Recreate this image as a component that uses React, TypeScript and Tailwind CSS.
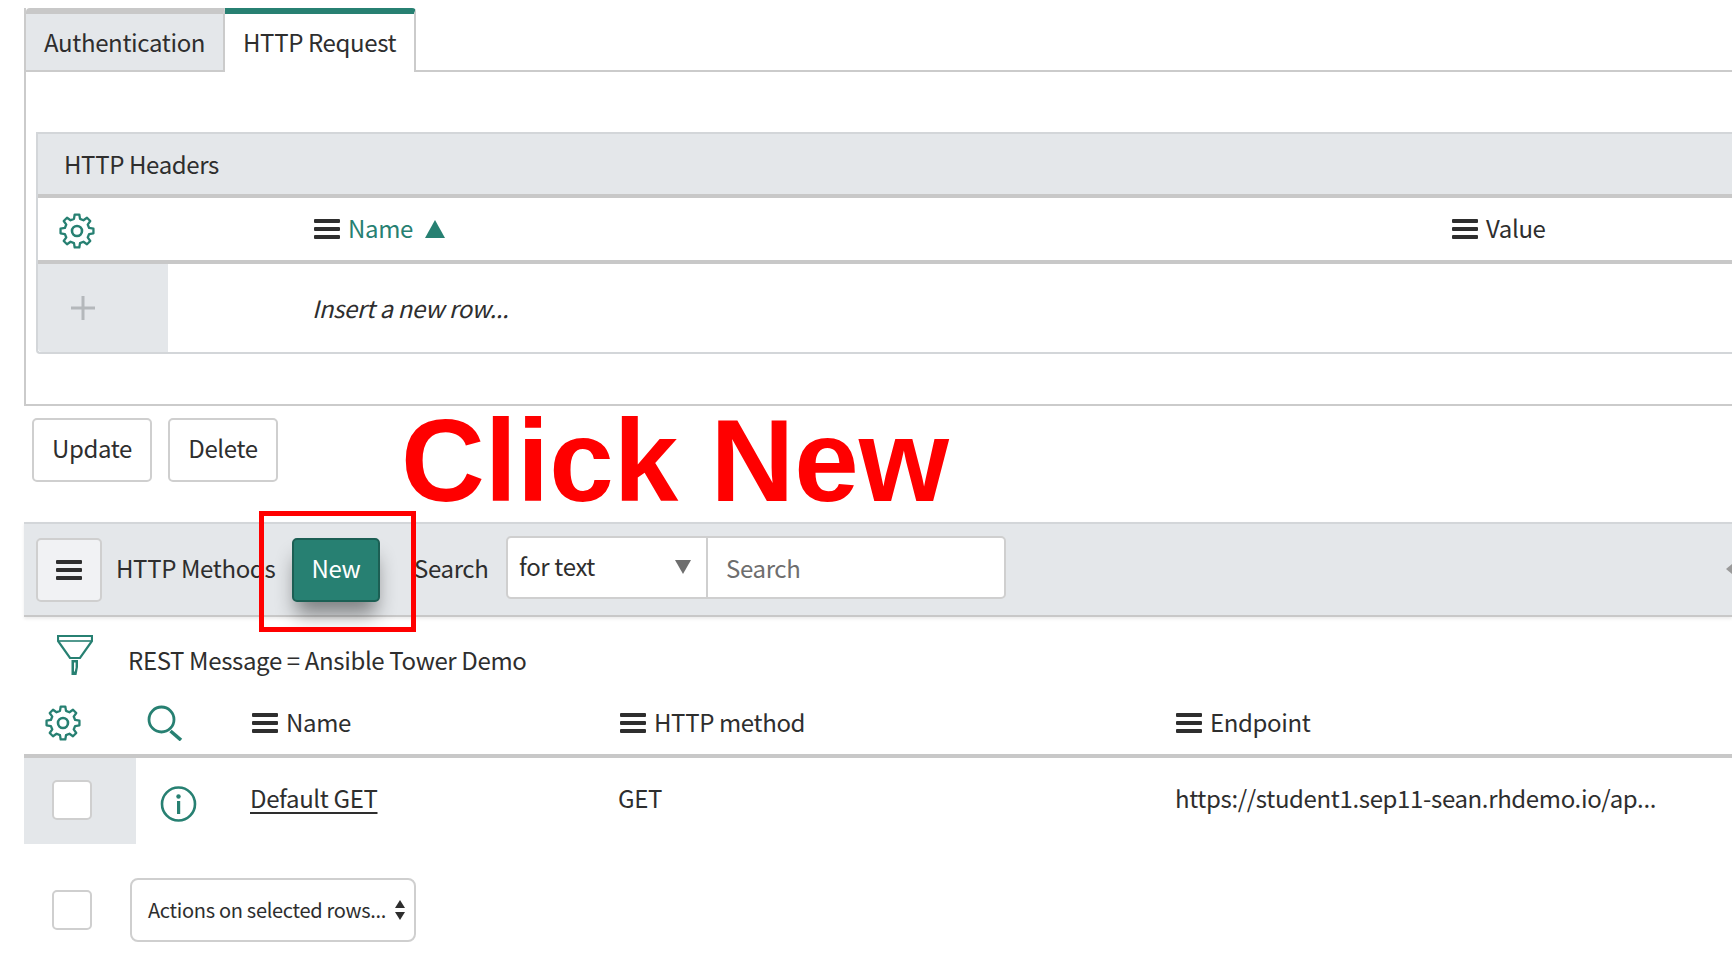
const FONT = "font-['Noto_Sans_CJK_SC','Noto_Sans',sans-serif]";

function Bars({ className = 'text-[#2e2e2e]' }: { className?: string }) {
  return (
    <svg width="26" height="20" viewBox="0 0 26 20" className={`shrink-0 ${className}`} fill="currentColor">
      <rect x="0" y="0" width="26" height="4" rx="1" />
      <rect x="0" y="8" width="26" height="4" rx="1" />
      <rect x="0" y="16" width="26" height="4" rx="1" />
    </svg>
  );
}

// eight toothed outline, same shape the service portal uses
const gearPath = () => {
  const pts: string[] = [];
  const at = (deg: number, r: number) => {
    const a = (deg * Math.PI) / 180;
    return `${(18 + r * Math.cos(a)).toFixed(2)} ${(18 + r * Math.sin(a)).toFixed(2)}`;
  };
  for (let i = 0; i < 8; i++) {
    const c = i * 45 - 90;
    pts.push(at(c - 14, 12.5), at(c - 8, 16.6), at(c + 8, 16.6), at(c + 14, 12.5));
  }
  return `M${pts.join('L')}Z`;
};

function Gear() {
  return (
    <svg width="36" height="36" viewBox="0 0 36 36" fill="none" stroke="#278072" strokeWidth="2.3" strokeLinejoin="round">
      <path d={gearPath()} />
      <circle cx="18" cy="18" r="5" strokeWidth="2.6" />
    </svg>
  );
}

function Funnel() {
  return (
    <svg width="36" height="40" viewBox="0 0 36 40" fill="none" stroke="#278072">
      <path d="M1 1h34v5L23 23H13L1 6z" strokeWidth="2.2" />
      <path d="M2 6h32" strokeWidth="1.6" />
      <path d="M14.5 25h6.5v7l-1.5 8h-5z" fill="#278072" stroke="none" />
      <path d="M17 27.5h1.6v5l-.8 4h-.8z" fill="#ffffff" stroke="none" />
    </svg>
  );
}

function Lens() {
  return (
    <svg width="36" height="36" viewBox="0 0 36 36" fill="none" stroke="#278072">
      <circle cx="14.5" cy="14.5" r="12.5" strokeWidth="2.8" />
      <path d="M23.5 26l10.5 9" strokeWidth="3.6" />
    </svg>
  );
}

function Info() {
  return (
    <svg width="37" height="36" viewBox="0 0 37 36" fill="none" stroke="#278072">
      <circle cx="18.5" cy="18" r="16.5" strokeWidth="2.6" />
      <circle cx="18.5" cy="10.5" r="2.2" fill="#278072" stroke="none" />
      <rect x="17" y="15" width="3.2" height="13" fill="#278072" stroke="none" />
    </svg>
  );
}

function Checkbox() {
  return <div className="w-[40px] h-[40px] bg-white border-2 border-[#cfcfcf] rounded-[5px]" />;
}

function Btn({ label, w }: { label: string; w: string }) {
  return (
    <button className={`${w} h-[64px] pb-[4px] bg-white border-2 border-[#cfcfcf] rounded-[5px] text-[24px] tracking-[-0.36px] text-[#2e2e2e]`}>
      {label}
    </button>
  );
}

export default function App() {
  return (
    <div className={`relative w-[1732px] h-[960px] overflow-hidden bg-white text-[#2e2e2e] text-[24px] tracking-[-0.36px] leading-none pt-[8px] pl-[24px] ${FONT}`}>
      {/* form section with tabs */}
      <div className="h-[398px] border-l-2 border-b-2 border-[#cbcbcb]">
        <div className="flex h-[64px] border-b-2 border-[#cbcbcb]">
          <div className="w-[199px] h-[64px] bg-[#e4e7ea] border-t-[6px] border-r-2 border-b-2 border-t-[#c8c8c8] border-r-[#cbcbcb] border-b-[#cbcbcb] rounded-tl-[4px] flex items-center pl-[18px]">
            Authentication
          </div>
          <div className="w-[191px] h-[64px] bg-white border-t-[6px] border-r-2 border-t-[#278072] border-r-[#cbcbcb] rounded-tr-[4px] flex items-center pl-[18px] pb-[3px]">
            HTTP Request
          </div>
        </div>
        <div className="ml-[10px] mt-[60px] border-l-2 border-b-2 border-[#d3d6d9] rounded-bl-[4px]">
          <div className="h-[66px] bg-[#e4e7ea] border-t-2 border-t-[#d3d6d9] border-b-4 border-b-[#c8c8c8] flex items-center pl-[26px]">
            HTTP Headers
          </div>
          <div className="h-[66px] border-b-4 border-[#c8c8c8] flex items-center">
            <div className="w-[276px] pl-[21px] pt-[3px] flex items-center"><Gear /></div>
            <div className="flex items-center gap-[8px] text-[#278072]">
              <Bars />
              <span className="pb-[2px]">Name</span>
              <svg width="20" height="18" viewBox="0 0 20 18" className="ml-[4px]" fill="#278072"><path d="M10 0l10 18H0z" /></svg>
            </div>
            <div className="flex items-center gap-[8px] ml-[1007px]">
              <Bars />
              <span className="pb-[2px]">Value</span>
            </div>
          </div>
          <div className="h-[88px] flex">
            <div className="w-[130px] bg-[#e4e7ea] flex items-center pl-[33px] rounded-bl-[4px]">
              <svg width="24" height="24" viewBox="0 0 24 24" stroke="#b4b8bb" strokeWidth="3"><path d="M12 0v24M0 12h24" /></svg>
            </div>
            <div className="flex items-center pl-[144px] italic">Insert a new row...</div>
          </div>
        </div>
      </div>

      <div className="flex gap-[16px] ml-[8px] mt-[12px]">
        <Btn label="Update" w="w-[120px]" />
        <Btn label="Delete" w="w-[110px]" />
      </div>

      {/* related list toolbar */}
      <div className="mt-[40px] h-[95px] bg-[#e4e7ea] border-t-2 border-t-[#d3d6d9] border-b-2 border-b-[#c8c8c8] shadow-[0_2px_3px_rgba(0,0,0,0.08)] flex items-center relative">
        <div className="ml-[12px] w-[66px] h-[64px] bg-[#f1f2f4] border-2 border-[#cfcfcf] rounded-[5px] flex items-center justify-center">
          <Bars />
        </div>
        <span className="ml-[14px] w-[176px] pb-[4px]">HTTP Methods</span>
        <button className="w-[88px] h-[64px] pb-[4px] bg-[#278072] border-2 border-[#1c5f54] rounded-[5px] text-white shadow-[0_16px_20px_-4px_rgba(0,0,0,0.45)]">
          New
        </button>
        <span className="ml-[34px] w-[92px] pb-[4px]">Search</span>
        <div className="w-[500px] h-[63px] -mt-[5px] bg-white border-2 border-[#cfcfcf] rounded-[5px] flex items-center">
          <div className="w-[200px] h-full border-r-2 border-[#cfcfcf] flex items-center justify-between pl-[11px] pr-[15px]">
            <span className="pb-[3px]">for text</span>
            <svg width="16" height="14" viewBox="0 0 16 14" fill="#6e6e6e"><path d="M0 0h16L8 14z" /></svg>
          </div>
          <span className="pl-[18px] pt-[1px] text-[#6e6e6e]">Search</span>
        </div>
        <svg width="6" height="10" viewBox="0 0 6 10" fill="#9a9a9a" className="absolute right-0 top-[40px]"><path d="M6 0v10L0 5z" /></svg>
      </div>

      <div className="h-[70px] flex items-center">
        <div className="ml-[33px] w-[71px] pt-[6px]"><Funnel /></div>
        <span className="pt-[16px]">REST Message = Ansible Tower Demo</span>
      </div>

      {/* methods table */}
      <div className="h-[71px] pt-[4px] border-b-4 border-[#c8c8c8] flex items-center">
        <div className="ml-[21px] w-[102px]"><Gear /></div>
        <div className="w-[105px]"><Lens /></div>
        <div className="w-[368px] flex items-center gap-[8px]"><Bars /><span className="pb-[1px]">Name</span></div>
        <div className="w-[556px] flex items-center gap-[8px]"><Bars /><span className="pb-[1px]">HTTP method</span></div>
        <div className="flex items-center gap-[8px]"><Bars /><span className="pb-[1px]">Endpoint</span></div>
      </div>
      <div className="h-[86px] flex">
        <div className="w-[112px] bg-[#e4e7ea] pl-[28px] pt-[22px]"><Checkbox /></div>
        <div className="w-[114px] pl-[24px] pt-[28px]"><Info /></div>
        <div className="w-[368px] flex items-center pb-[7px]"><span className="underline underline-offset-4">Default GET</span></div>
        <div className="w-[557px] flex items-center pb-[7px]">GET</div>
        <div className="flex items-center pb-[7px]">https://student1.sep11-sean.rhdemo.io/ap...</div>
      </div>

      <div className="flex items-center mt-[34px]">
        <div className="w-[106px] pl-[28px]"><Checkbox /></div>
        <div className="w-[286px] h-[64px] border-2 border-[#cfcfcf] rounded-[8px] flex items-center justify-between pl-[16px] pr-[8px] text-[20px] tracking-[-0.3px] whitespace-nowrap">
          <span>Actions on selected rows...</span>
          <svg width="12" height="20" viewBox="0 0 12 20" fill="#2e2e2e"><path d="M6 0l5 8H1zM6 20l-5-8h10z" /></svg>
        </div>
      </div>

      {/* annotation drawn over the screenshot */}
      <div className="absolute left-[401px] top-[403px] font-['Liberation_Sans',sans-serif] font-bold text-[116px] leading-[116px] tracking-normal text-[#ff0000] whitespace-nowrap">
        Click New
      </div>
      <div className="absolute left-[259px] top-[511px] w-[157px] h-[121px] border-[5px] border-[#ff0000]" />
    </div>
  );
}
